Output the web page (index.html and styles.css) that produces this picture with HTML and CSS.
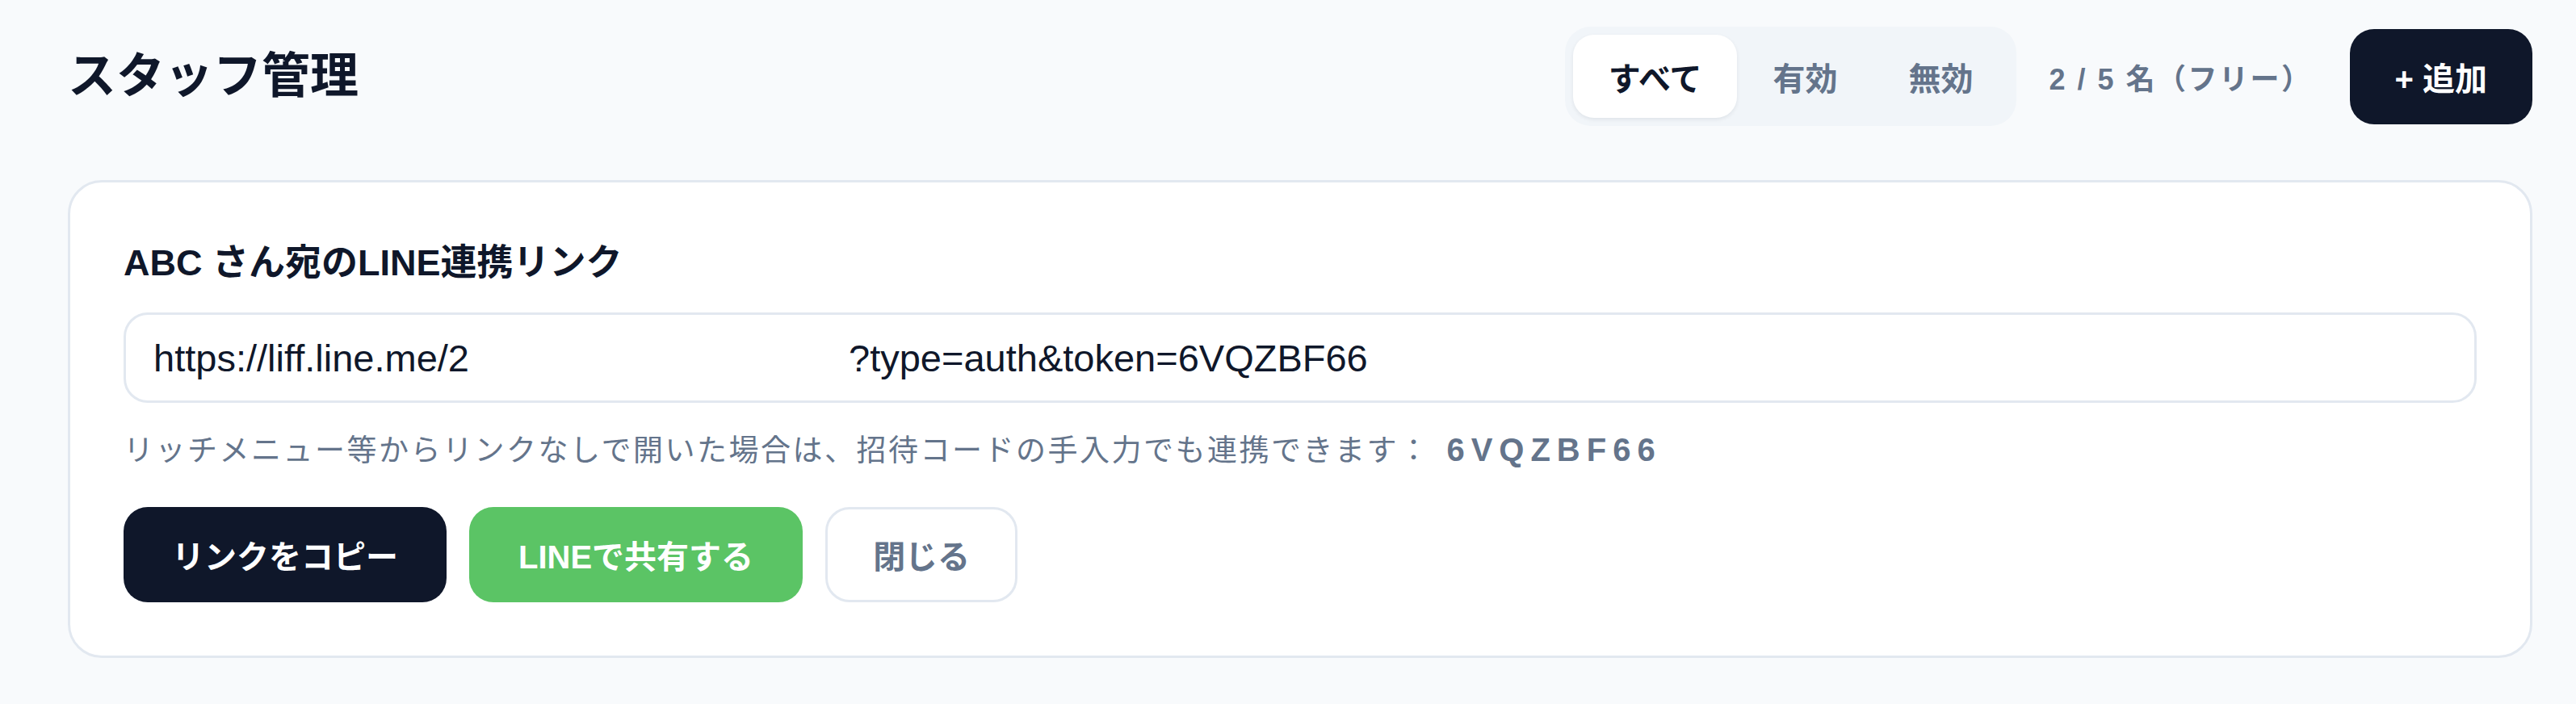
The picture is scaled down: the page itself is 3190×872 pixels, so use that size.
FILE: index.html
```html
<!DOCTYPE html>
<html lang="ja">
<head>
    <meta charset="UTF-8">
    <meta name="viewport" content="width=device-width, initial-scale=1.0">
    <title>スタッフ管理</title>
    <link rel="stylesheet" href="styles.css">
</head>
<body>
    <div class="page">
        <header class="page-header">
            <h1>スタッフ管理</h1>
            <div class="header-actions">
                <div class="tabs">
                    <button class="tab active">すべて</button>
                    <button class="tab">有効</button>
                    <button class="tab">無効</button>
                </div>
                <span class="count">2 / 5 名（フリー）</span>
                <button class="btn btn-dark btn-add">+ 追加</button>
            </div>
        </header>

        <section class="card">
            <h2>ABC さん宛のLINE連携リンク</h2>
            <div class="link-field">https://liff.line.me/2<span class="masked"></span>?type=auth&amp;token=6VQZBF66</div>
            <p class="hint">リッチメニュー等からリンクなしで開いた場合は、招待コードの手入力でも連携できます：<span class="code">6VQZBF66</span></p>
            <div class="actions">
                <button class="btn btn-dark btn-copy">リンクをコピー</button>
                <button class="btn btn-line">LINEで共有する</button>
                <button class="btn btn-outline">閉じる</button>
            </div>
        </section>
    </div>
</body>
</html>
```

FILE: styles.css
```css
body {
    margin: 0;
    background-color: #f8fafc; /* slate-50 */
    color: #0f172a;
    font-family: "Liberation Sans", "Noto Sans CJK JP", sans-serif;
}

.page {
    padding: 33px 54px 0 84px;
}

h1, h2, p {
    margin: 0;
}

button {
    font-family: inherit;
    border: none;
    cursor: pointer;
}

/* Header */
.page-header {
    display: flex;
    align-items: center;
    justify-content: space-between;
    margin-bottom: 67px;
}

.page-header h1 {
    font-size: 60px;
    font-weight: 700;
    line-height: 1.3;
}

.header-actions {
    display: flex;
    align-items: center;
}

.tabs {
    display: flex;
    padding: 10px;
    background-color: #f1f5f9;
    border-radius: 32px;
}

.tab {
    height: 103px;
    padding: 0 44px;
    font-size: 40px;
    font-weight: 700;
    color: #64748b;
    background: transparent;
    border-radius: 26px;
}

.tab.active {
    background-color: #fff;
    color: #0f172a;
    box-shadow: 0 2px 5px rgba(15, 23, 42, 0.08);
}

.count {
    margin-left: 40px;
    font-size: 36px;
    font-weight: 600;
    letter-spacing: 2.5px;
    color: #64748b;
}

.btn {
    height: 118px;
    padding: 0 56px;
    font-size: 40px;
    font-weight: 700;
    border-radius: 30px;
}

.btn-add {
    margin-left: 46px;
}

.btn-dark {
    background-color: #0f172a;
    color: #fff;
}

.btn-copy {
    padding: 0 60px;
}

.btn-line {
    background-color: #5bc465;
    color: #fff;
    padding: 0 61px;
}

.btn-outline {
    background-color: #fff;
    color: #64748b;
    border: 3px solid #e2e8f0;
}

/* Card */
.card {
    background-color: #fff;
    border: 3px solid #e2e8f0;
    border-radius: 42px;
    padding: 66px;
}

.card h2 {
    font-size: 45px;
    font-weight: 700;
    line-height: 67px;
}

.link-field {
    margin-top: 28px;
    height: 106px;
    display: flex;
    align-items: center;
    padding: 0 34px;
    border: 3px solid #e2e8f0;
    border-radius: 30px;
    font-size: 47px;
    color: #0f172a;
    white-space: nowrap;
}

/* part of the url hidden in the screenshot */
.masked {
    display: inline-block;
    width: 470px;
}

.hint {
    margin-top: 31px;
    font-size: 37px;
    line-height: 54px;
    letter-spacing: 2.5px;
    color: #64748b;
}

.hint .code {
    margin-left: 20px;
    font-size: 40px;
    font-weight: 700;
    letter-spacing: 8px;
}

.actions {
    display: flex;
    gap: 28px;
    margin-top: 42px;
}
```
